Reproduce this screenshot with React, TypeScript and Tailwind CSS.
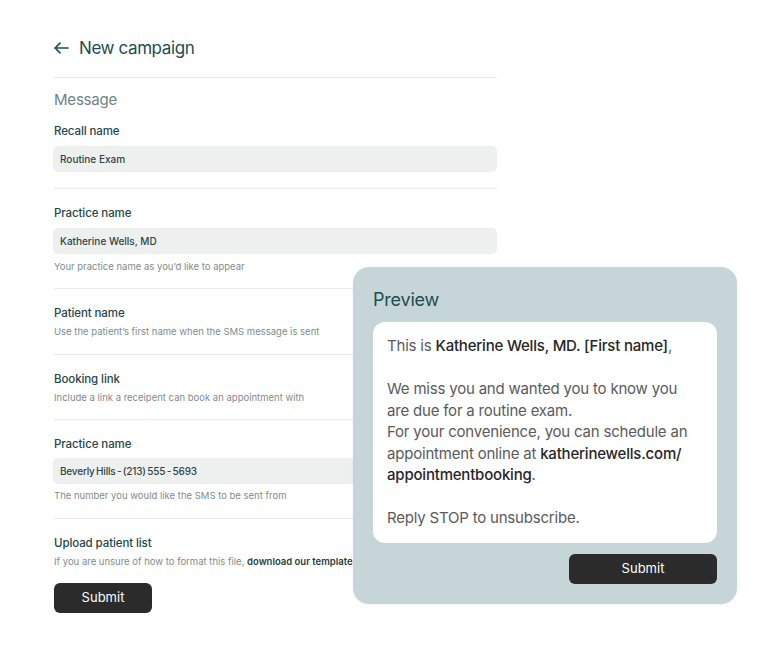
const font = { fontFamily: "Inter, 'Noto Sans', sans-serif" };

function BackArrow() {
  return (
    <svg
      width="15"
      height="14"
      viewBox="0 0 15 14"
      fill="none"
      stroke="currentColor"
      strokeWidth="1.7"
      strokeLinecap="round"
      strokeLinejoin="round"
    >
      <path d="M14 7H1.2" />
      <path d="M6 2.2 1.2 7 6 11.8" />
    </svg>
  );
}

function Divider() {
  return <div className="h-px w-[443px] bg-[#e8ecec]" />;
}

function Label({ children }: { children: React.ReactNode }) {
  return (
    <div className="text-[11.5px] leading-[18px] font-medium tracking-[-0.1px] text-[#1f4649]">
      {children}
    </div>
  );
}

function Help({ children }: { children: React.ReactNode }) {
  return (
    <div className="text-[9.5px] leading-[16px] text-[#7f8c8d]">{children}</div>
  );
}

function Field({ value, narrow }: { value: string; narrow?: boolean }) {
  return (
    <div
      className={
        narrow
          ? "h-[26px] w-[444px] -ml-px rounded-[5px] bg-[#edf0ef] px-[7px] flex items-center text-[10px] font-medium tracking-[-0.2px] [word-spacing:-1px] text-[#2d4547]"
          : "h-[26px] w-[444px] -ml-px rounded-[5px] bg-[#edf0ef] px-[7px] flex items-center text-[10px] font-medium text-[#2d4547]"
      }
    >
      {value}
    </div>
  );
}

function PreviewPanel() {
  return (
    <div className="absolute left-[353px] top-[267px] w-[384px] rounded-[16px] bg-[#c6d6d8] px-[20px] pt-[19px] pb-[20px] shadow-[0_1px_3px_rgba(0,0,0,0.06)]">
      <div className="text-[18px] leading-[28px] tracking-[-0.2px] text-[#1d4d4f]">
        Preview
      </div>
      <div className="mt-[8px] rounded-[12px] bg-white px-[14px] pt-[13px] pb-[14px] text-[15px] leading-[21.5px] tracking-[-0.2px] whitespace-nowrap text-[#5a5a5a]">
        <p>
          This is{" "}
          <span className="font-medium text-[#262626]">
            Katherine Wells, MD. [First name]
          </span>
          ,
        </p>
        <p className="mt-[21.5px]">
          We miss you and wanted you to know you
          <br />
          are due for a routine exam.
          <br />
          For your convenience, you can schedule an
          <br />
          appointment online at{" "}
          <span className="font-medium text-[#262626]">katherinewells.com/</span>
          <br />
          <span className="font-medium text-[#262626]">appointmentbooking</span>.
        </p>
        <p className="mt-[21.5px]">Reply STOP to unsubscribe.</p>
      </div>
      <div className="mt-[11px] flex justify-end">
        <button className="h-[30px] w-[148px] rounded-[6px] bg-[#2b2b2b] text-[13px] text-white">
          Submit
        </button>
      </div>
    </div>
  );
}

export default function App() {
  return (
    <div className="relative h-[649px] w-[768px] bg-white" style={font}>
      <div className="pl-[54px] pt-[34px]">
        <div className="flex h-[28px] items-center text-[#1d4d50]">
          <BackArrow />
          <span className="ml-[10px] text-[17px] leading-[28px] tracking-[-0.4px]">
            New campaign
          </span>
        </div>
        <div className="mt-[15px]">
          <Divider />
        </div>
        <div className="mt-[10px] text-[15px] leading-[24px] tracking-[-0.2px] text-[#6f8384]">
          Message
        </div>

        <div className="mt-[10px] pb-[16px]">
          <Label>Recall name</Label>
          <div className="mt-[6px]">
            <Field value="Routine Exam" />
          </div>
        </div>
        <Divider />

        <div className="pt-[15px] pb-[13px]">
          <Label>Practice name</Label>
          <div className="mt-[6px]">
            <Field value="Katherine Wells, MD" />
          </div>
          <div className="mt-[5px]">
            <Help>Your practice name as you’d like to appear</Help>
          </div>
        </div>
        <Divider />

        <div className="pt-[15px] pb-[14px]">
          <Label>Patient name</Label>
          <div className="mt-[2px]">
            <Help>Use the patient’s first name when the SMS message is sent</Help>
          </div>
        </div>
        <Divider />

        <div className="pt-[15px] pb-[13px]">
          <Label>Booking link</Label>
          <div className="mt-[2px]">
            <Help>Include a link a receipent can book an appointment with</Help>
          </div>
        </div>
        <Divider />

        <div className="pt-[15px] pb-[14px]">
          <Label>Practice name</Label>
          <div className="mt-[5px]">
            <Field value="Beverly Hills - (213) 555 - 5693" narrow />
          </div>
          <div className="mt-[4px]">
            <Help>The number you would like the SMS to be sent from</Help>
          </div>
        </div>
        <Divider />

        <div className="pt-[15px]">
          <Label>Upload patient list</Label>
          <div className="mt-[2px]">
            <Help>
              If you are unsure of how to format this file,{" "}
              <span className="font-semibold text-[#1f3d40]">
                download our template
              </span>
            </Help>
          </div>
          <button className="mt-[13px] h-[30px] w-[98px] rounded-[6px] bg-[#2b2b2b] text-[13px] text-white">
            Submit
          </button>
        </div>
      </div>
      <PreviewPanel />
    </div>
  );
}
